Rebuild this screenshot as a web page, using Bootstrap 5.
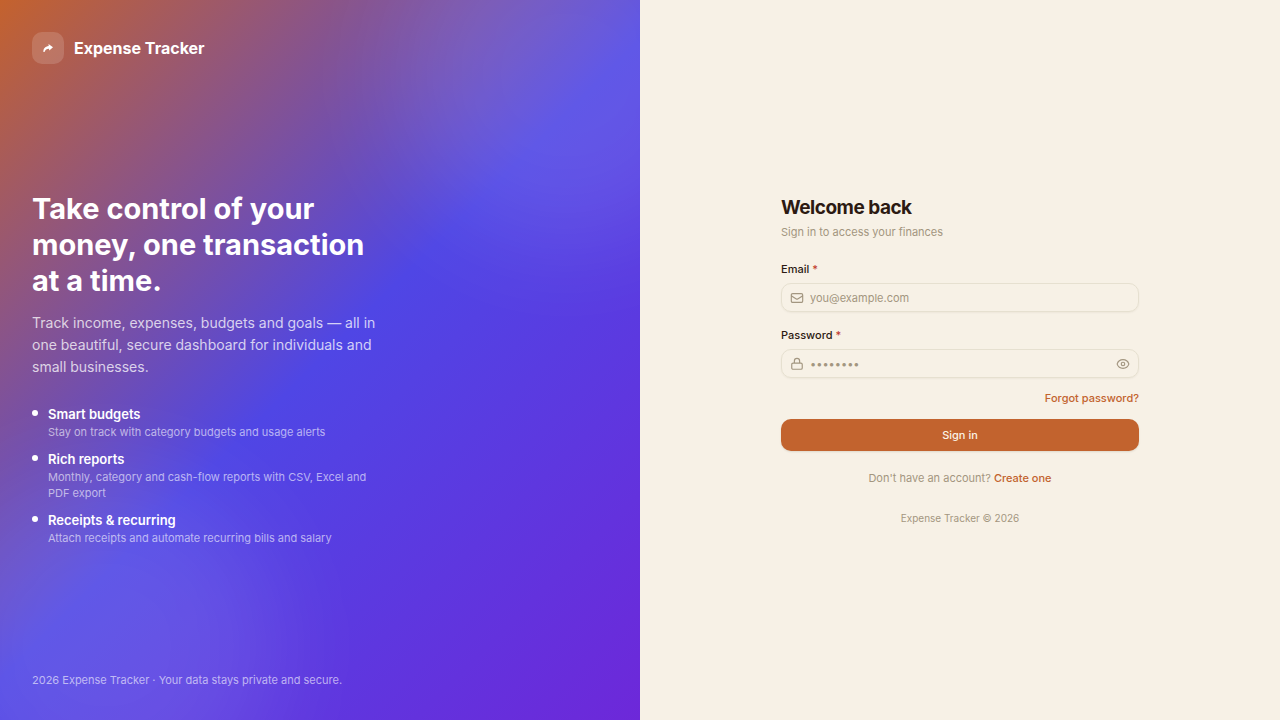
<!DOCTYPE html>
<html lang="en">
<head>
<meta charset="utf-8">
<meta name="viewport" content="width=device-width, initial-scale=1">
<title>Sign in · Expense Tracker</title>
<link href="https://cdn.jsdelivr.net/npm/bootstrap@5.3.0/dist/css/bootstrap.min.css" rel="stylesheet">
<style>
  :root { --brand: #c2632e; --ink: #2c1a12; --muted: #a39680; --paper: #f7f1e6; --line: #e6e0d0; }
  body { font-family: Inter, sans-serif; font-size: 11px; line-height: 16px; color: var(--ink); background: var(--paper); }
  h1, h2, h3, p { margin: 0; }
  .promo { background: linear-gradient(135deg, #c4622d 0%, #4f46e5 50%, #6d28d9 100%); }
  .promo-body { padding: 32px; }
  .glow { position: absolute; width: 340px; height: 340px; border-radius: 50%; background: rgba(255,255,255,.1); filter: blur(52px); }
  .glow-top { top: -96px; right: -96px; }
  .glow-bottom { bottom: -96px; left: -64px; }
  .brand-row { gap: 10px; }
  .brand-mark { width: 32px; height: 32px; border-radius: 10px; background: rgba(255,255,255,.15); }
  .brand-name { font-size: 16px; line-height: 24px; font-weight: 700; }
  .pitch { max-width: 352px; }
  .pitch h1 { font-size: 29px; line-height: 36px; font-weight: 700; }
  .pitch-lead { margin-top: 13px; font-size: 14px; line-height: 22px; color: rgba(255,255,255,.75); }
  .perks { margin-top: 27px; gap: 10px; }
  .perks li { gap: 10px; }
  .dot { width: 6px; height: 6px; border-radius: 50%; background: #fff; margin-top: 5px; }
  .perk-title { font-size: 13px; line-height: 19px; font-weight: 600; }
  .perk-text, .fine { color: rgba(255,255,255,.6); }
  .signin { max-width: 358px; }
  .signin h2 { font-size: 19px; line-height: 26px; font-weight: 700; letter-spacing: -.5px; margin-bottom: 3px; }
  .soft { color: var(--muted); }
  .group { margin-top: 15px; }
  .intro + .group { margin-top: 21px; }
  .group label { margin-bottom: 6px; font-weight: 500; }
  .group label span { color: #c0392b; }
  .field { height: 29px; padding: 0 8px; gap: 6px; border: 1px solid var(--line); border-radius: 10px; box-shadow: 0 1px 2px rgba(60,40,10,.05); color: var(--muted); }
  .field input { flex: 1; min-width: 0; padding: 0; border: 0; outline: 0; background: none; font-size: 11px; line-height: 16px; color: var(--ink); }
  .field input::placeholder { color: var(--muted); opacity: 1; }
  .field:focus-within { border-color: var(--brand); }
  .signin a { color: var(--brand); font-weight: 500; text-decoration: none; }
  .forgot { margin: 12px 0 13px; }
  .btn-brand { --bs-btn-color: #fbf3e7; --bs-btn-bg: var(--brand); --bs-btn-hover-bg: #a95324; --bs-btn-hover-color: #fff; height: 32px; padding: 0; border: 0; border-radius: 10px; font-size: 11px; font-weight: 500; box-shadow: 0 1px 2px rgba(60,40,10,.12); }
  .join { margin-top: 19px; }
  .legal { margin-top: 26px; font-size: 10px; line-height: 13px; }
</style>
</head>
<body>
<div class="container-fluid p-0">
  <div class="row g-0 min-vh-100">
    <aside class="promo col-12 col-md-6 position-relative overflow-hidden text-white">
      <div class="glow glow-top"></div>
      <div class="glow glow-bottom"></div>
      <div class="promo-body position-relative d-flex flex-column justify-content-between h-100">
        <div class="brand-row d-flex align-items-center">
          <span class="brand-mark d-flex align-items-center justify-content-center">
            <svg width="16" height="16" viewBox="0 0 16 16" fill="currentColor" aria-hidden="true"><path d="M8.500 4 13 7.200 9.300 10.400 9 8.800C6.500 8.800 5.500 9.500 4.800 11.800L3.400 12C3.200 8.700 5 6.400 8.700 5.900Z"/></svg>
          </span>
          <span class="brand-name">Expense Tracker</span>
        </div>
        <div class="pitch">
          <h1>Take control of your money, one transaction at a time.</h1>
          <p class="pitch-lead">Track income, expenses, budgets and goals — all in one beautiful, secure dashboard for individuals and small businesses.</p>
          <ul class="perks list-unstyled d-flex flex-column mb-0">
            <li class="d-flex"><span class="dot flex-shrink-0"></span><div><h3 class="perk-title">Smart budgets</h3><p class="perk-text">Stay on track with category budgets and usage alerts</p></div></li>
            <li class="d-flex"><span class="dot flex-shrink-0"></span><div><h3 class="perk-title">Rich reports</h3><p class="perk-text">Monthly, category and cash-flow reports with CSV, Excel and PDF export</p></div></li>
            <li class="d-flex"><span class="dot flex-shrink-0"></span><div><h3 class="perk-title">Receipts &amp; recurring</h3><p class="perk-text">Attach receipts and automate recurring bills and salary</p></div></li>
          </ul>
        </div>
        <p class="fine">2026 Expense Tracker · Your data stays private and secure.</p>
      </div>
    </aside>
    <main class="col-12 col-md-6 d-flex align-items-center justify-content-center">
      <form class="signin w-100">
        <h2>Welcome back</h2>
        <p class="intro soft">Sign in to access your finances</p>
        <div class="group">
          <label class="d-block" for="email">Email <span>*</span></label>
          <div class="field d-flex align-items-center">
            <svg width="14" height="14" viewBox="0 0 24 24" fill="none" stroke="currentColor" stroke-width="2" stroke-linecap="round" stroke-linejoin="round" aria-hidden="true"><path d="M21.750 6.750v10.500a2.250 2.250 0 0 1-2.250 2.250h-15a2.250 2.250 0 0 1-2.250-2.250V6.750m19.500 0A2.250 2.250 0 0 0 19.500 4.500h-15a2.250 2.250 0 0 0-2.250 2.250m19.500 0v.243a2.250 2.250 0 0 1-1.070 1.916l-7.500 4.615a2.250 2.250 0 0 1-2.360 0L3.320 8.910a2.250 2.250 0 0 1-1.070-1.916V6.750"/></svg>
            <input id="email" type="email" placeholder="you@example.com">
          </div>
        </div>
        <div class="group">
          <label class="d-block" for="password">Password <span>*</span></label>
          <div class="field d-flex align-items-center">
            <svg width="14" height="14" viewBox="0 0 24 24" fill="none" stroke="currentColor" stroke-width="2" stroke-linecap="round" stroke-linejoin="round" aria-hidden="true"><path d="M16.500 10.500V6.750a4.500 4.500 0 1 0-9 0v3.750m-2.250 10.500h13.500a2.250 2.250 0 0 0 2.250-2.250v-6a2.250 2.250 0 0 0-2.250-2.250H5.250a2.250 2.250 0 0 0-2.250 2.250v6a2.250 2.250 0 0 0 2.250 2.250Z"/></svg>
            <input id="password" type="password" placeholder="••••••••">
            <button type="button" class="btn p-0 border-0 d-flex soft" aria-label="Show password"><svg width="14" height="14" viewBox="0 0 24 24" fill="none" stroke="currentColor" stroke-width="2" stroke-linecap="round" stroke-linejoin="round" aria-hidden="true"><path d="M2.036 12.322a1.012 1.012 0 0 1 0-.639C3.423 7.510 7.360 4.500 12 4.500c4.638 0 8.573 3.007 9.963 7.178.070.207.070.431 0 .639C20.577 16.490 16.640 19.500 12 19.500c-4.638 0-8.573-3.007-9.963-7.178Z"/><path d="M15 12a3 3 0 1 1-6 0 3 3 0 0 1 6 0Z"/></svg></button>
          </div>
        </div>
        <p class="forgot text-end"><a href="#">Forgot password?</a></p>
        <button type="submit" class="btn btn-brand w-100">Sign in</button>
        <p class="join soft text-center">Don't have an account? <a href="#">Create one</a></p>
        <p class="legal soft text-center">Expense Tracker © 2026</p>
      </form>
    </main>
  </div>
</div>
<script src="https://cdn.jsdelivr.net/npm/bootstrap@5.3.0/dist/js/bootstrap.bundle.min.js"></script>
</body>
</html>
